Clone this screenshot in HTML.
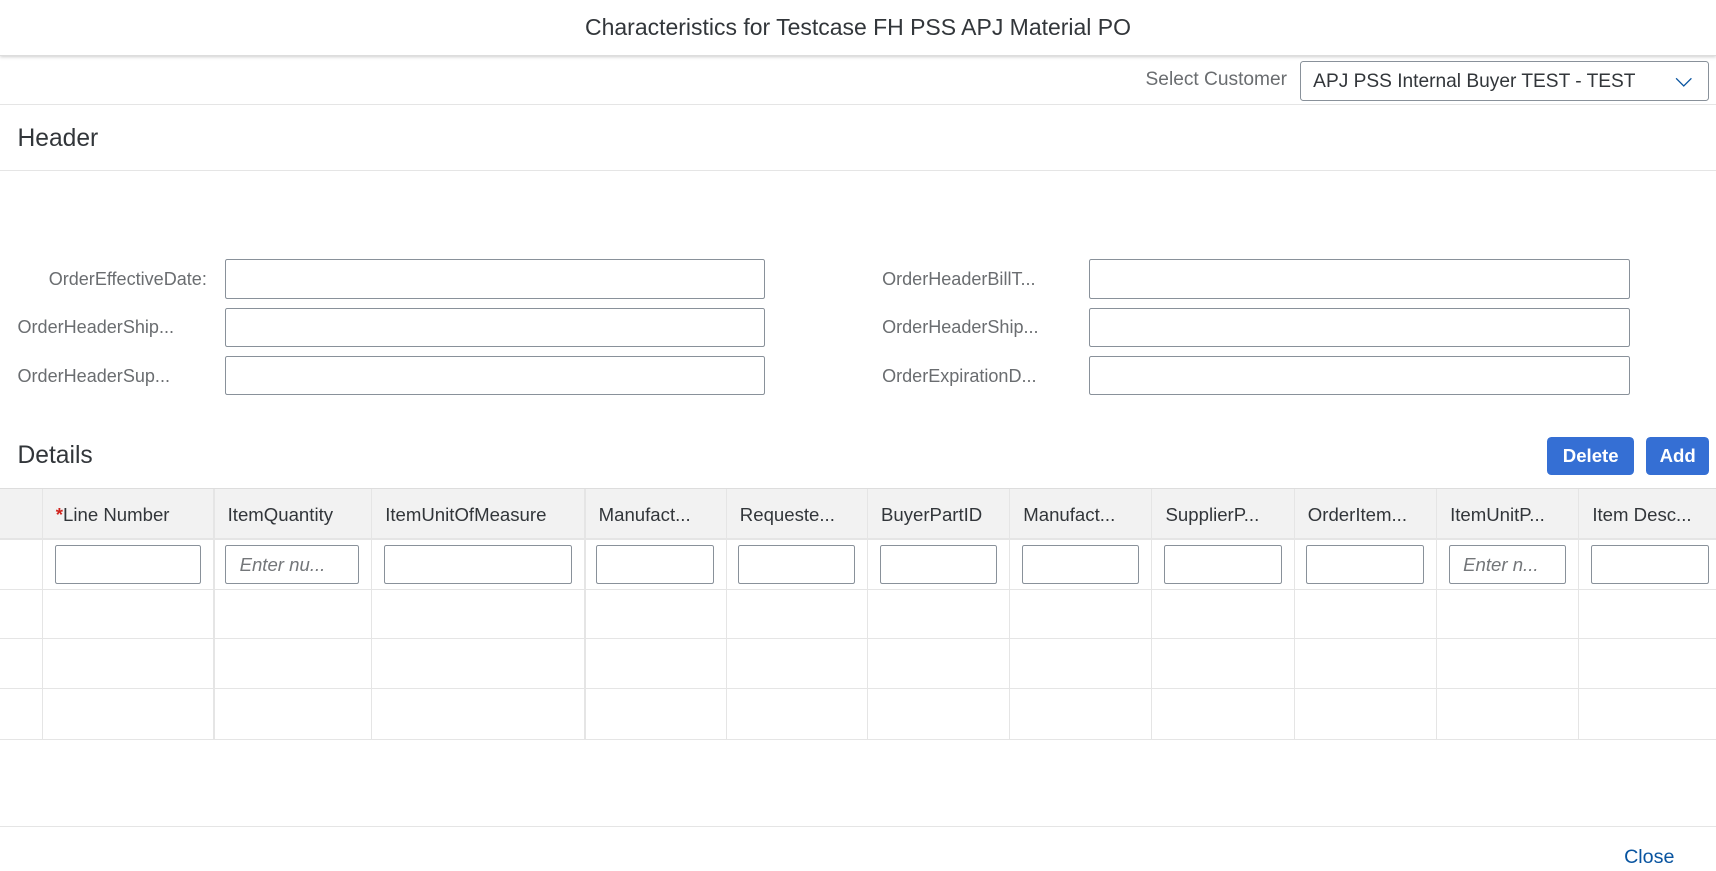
<!DOCTYPE html>
<html><head><meta charset="utf-8"><style>
html,body{margin:0;padding:0;background:#fff;overflow:hidden}
body{width:1716px;height:871px}
#w{position:relative;width:1568px;height:796px;zoom:1.0944;font-family:"Liberation Sans",sans-serif;color:#32363a}
.a{position:absolute;white-space:nowrap}
.in{position:absolute;box-sizing:border-box;border:1px solid #89919a;border-radius:2px;background:#fff}
.lbl{font-size:16.5px;color:#6a6d70}
.hl{position:absolute;left:0;right:0;height:1px;background:#e5e5e5}
.th{position:absolute;top:448px;height:45px;line-height:45px;font-size:17px;color:#32363a;padding-left:12px;box-sizing:border-box;overflow:hidden}
.vl{position:absolute;top:447px;height:228px;width:1px;background:#e5e5e5}
.btn{position:absolute;top:399px;height:35px;line-height:35px;background:#356fd4;color:#fff;font-weight:bold;font-size:17px;border-radius:4px;text-align:center}
.ph{font-style:italic;color:#74777a;font-size:17px;line-height:35px;padding-left:12px}
</style></head><body><div id="w">
<div class="a" style="left:0;right:0;top:0;height:50px;line-height:51px;text-align:center;font-size:21px;box-shadow:0 1px 3px rgba(0,0,0,.2);border-bottom:1px solid #ddd">Characteristics for Testcase FH PSS APJ Material PO</div>
<div class="a lbl" style="right:392px;top:63px;font-size:17.5px">Select Customer</div>
<div class="in" style="left:1188px;top:56px;width:374px;height:36px;border-radius:3px"><span class="a" style="left:11px;top:8px;font-size:17.5px">APJ PSS Internal Buyer TEST - TEST</span>
<svg class="a" style="left:342px;top:12px" width="16" height="12" viewBox="0 0 16 12"><path d="M1 3 L8 10 L15 3" fill="none" stroke="#0854a0" stroke-width="1.2"/></svg></div>
<div class="hl" style="top:95px"></div>
<div class="a" style="left:16px;top:114px;font-size:22.5px">Header</div>
<div class="hl" style="top:155px"></div>

<div class="a lbl" style="right:1379px;top:246px">OrderEffectiveDate:</div>
<div class="a lbl" style="left:16px;top:290px">OrderHeaderShip...</div>
<div class="a lbl" style="left:16px;top:334px">OrderHeaderSup...</div>
<div class="a lbl" style="left:806px;top:246px">OrderHeaderBillT...</div>
<div class="a lbl" style="left:806px;top:290px">OrderHeaderShip...</div>
<div class="a lbl" style="left:806px;top:334px">OrderExpirationD...</div>
<div class="in" style="left:206px;top:237px;width:493px;height:36px"></div>
<div class="in" style="left:206px;top:281px;width:493px;height:36px"></div>
<div class="in" style="left:206px;top:325px;width:493px;height:36px"></div>
<div class="in" style="left:995px;top:237px;width:494px;height:36px"></div>
<div class="in" style="left:995px;top:281px;width:494px;height:36px"></div>
<div class="in" style="left:995px;top:325px;width:494px;height:36px"></div>

<div class="a" style="left:16px;top:404px;font-size:22.5px">Details</div>
<div class="btn" style="left:1414px;width:79px">Delete</div>
<div class="btn" style="left:1504px;width:58px">Add</div>

<div class="a" style="left:0;right:0;top:446px;height:46px;background:#f2f2f2;border-top:1px solid #ddd"></div>
<div class="hl" style="top:492px"></div>
<div class="hl" style="top:538px"></div>
<div class="hl" style="top:583px"></div>
<div class="hl" style="top:629px"></div>
<div class="hl" style="top:675px"></div>
<div class="vl" style="left:38px"></div><div class="vl" style="left:195px"></div><div class="vl" style="left:339px"></div><div class="vl" style="left:534px"></div><div class="vl" style="left:663px"></div><div class="vl" style="left:792px"></div><div class="vl" style="left:922px"></div><div class="vl" style="left:1052px"></div><div class="vl" style="left:1182px"></div><div class="vl" style="left:1312px"></div><div class="vl" style="left:1442px"></div>
<div class="th" style="left:39px;width:156px"><span style="color:#d0231d;font-weight:bold">*</span>Line Number</div>
<div class="th" style="left:196px;width:143px">ItemQuantity</div>
<div class="th" style="left:340px;width:194px">ItemUnitOfMeasure</div>
<div class="th" style="left:535px;width:128px">Manufact...</div>
<div class="th" style="left:664px;width:128px">Requeste...</div>
<div class="th" style="left:793px;width:129px">BuyerPartID</div>
<div class="th" style="left:923px;width:129px">Manufact...</div>
<div class="th" style="left:1053px;width:129px">SupplierP...</div>
<div class="th" style="left:1183px;width:129px">OrderItem...</div>
<div class="th" style="left:1313px;width:129px">ItemUnitP...</div>
<div class="th" style="left:1443px;width:125px">Item Desc...</div>

<div class="in" style="left:50px;top:498px;width:134px;height:36px"></div>
<div class="in ph" style="left:206px;top:498px;width:122px;height:36px">Enter nu...</div>
<div class="in" style="left:351px;top:498px;width:172px;height:36px"></div>
<div class="in" style="left:545px;top:498px;width:107px;height:36px"></div>
<div class="in" style="left:674px;top:498px;width:107px;height:36px"></div>
<div class="in" style="left:804px;top:498px;width:107px;height:36px"></div>
<div class="in" style="left:934px;top:498px;width:107px;height:36px"></div>
<div class="in" style="left:1064px;top:498px;width:107px;height:36px"></div>
<div class="in" style="left:1193px;top:498px;width:108px;height:36px"></div>
<div class="in ph" style="left:1324px;top:498px;width:107px;height:36px">Enter n...</div>
<div class="in" style="left:1454px;top:498px;width:108px;height:36px"></div>

<div class="hl" style="top:755px"></div>
<div class="a" style="left:1484px;top:773px;font-size:18px;color:#0854a0">Close</div>
</div></body></html>
